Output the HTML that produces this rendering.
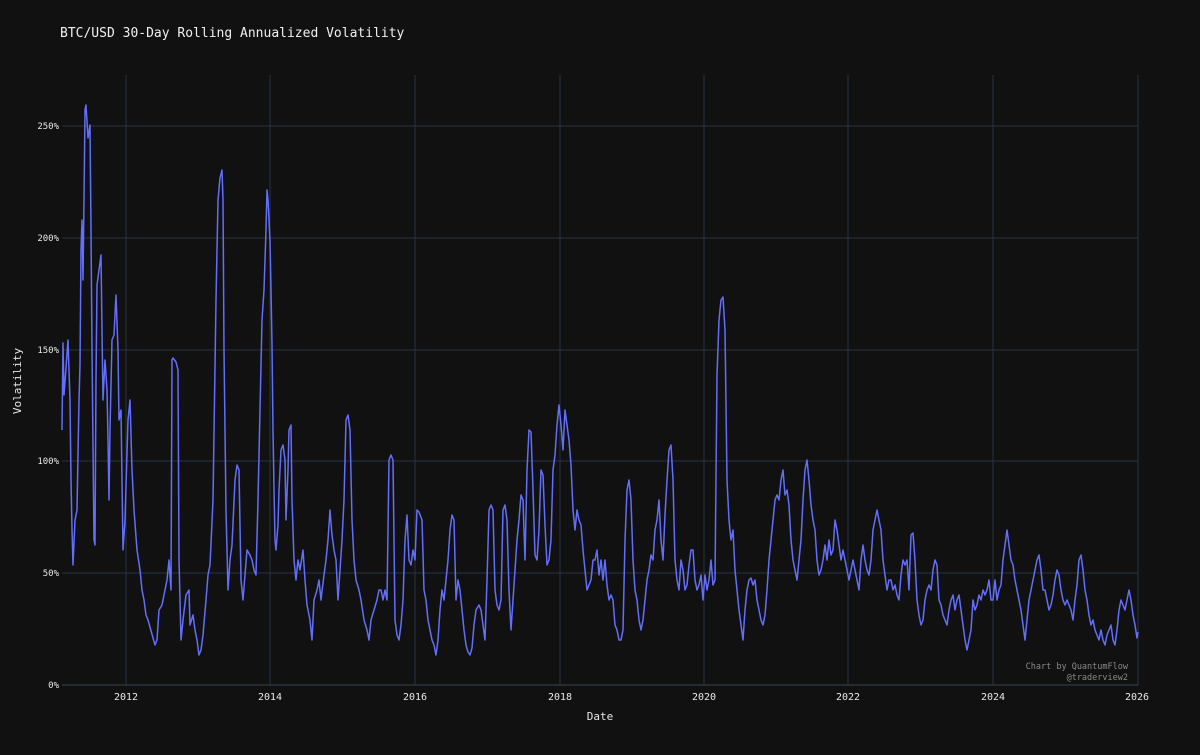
<!DOCTYPE html>
<html><head><meta charset="utf-8"><style>
html,body{margin:0;padding:0;background:#111112;}
svg text{font-family:"DejaVu Sans Mono","Liberation Mono",monospace;}
</style></head><body>
<svg width="1200" height="750" viewBox="0 0 1200 750" xmlns="http://www.w3.org/2000/svg">
<rect width="1200" height="750" fill="#111112"/>
<text x="60" y="37" fill="#f0f0f0" font-size="13">BTC/USD 30-Day Rolling Annualized Volatility</text>
<g stroke="#283442" stroke-width="1">
<line x1="62" y1="126" x2="1138" y2="126"/><line x1="62" y1="238" x2="1138" y2="238"/>
<line x1="62" y1="350" x2="1138" y2="350"/><line x1="62" y1="461" x2="1138" y2="461"/>
<line x1="62" y1="573" x2="1138" y2="573"/>
<line x1="126" y1="75" x2="126" y2="685"/><line x1="270" y1="75" x2="270" y2="685"/>
<line x1="415" y1="75" x2="415" y2="685"/><line x1="560" y1="75" x2="560" y2="685"/>
<line x1="704" y1="75" x2="704" y2="685"/><line x1="848" y1="75" x2="848" y2="685"/>
<line x1="993" y1="75" x2="993" y2="685"/><line x1="1138" y1="75" x2="1138" y2="685"/>
</g>
<line x1="62" y1="685" x2="1138" y2="685" stroke="#3a4450" stroke-width="1"/>
<g fill="#e8e8e8" font-size="9" text-anchor="end">
<text x="59" y="129">250%</text><text x="59" y="241">200%</text><text x="59" y="353">150%</text>
<text x="59" y="464">100%</text><text x="59" y="576">50%</text><text x="59" y="688">0%</text>
</g>
<g fill="#e8e8e8" font-size="10" text-anchor="middle">
<text x="126" y="700">2012</text><text x="270" y="700">2014</text><text x="415" y="700">2016</text>
<text x="560" y="700">2018</text><text x="704" y="700">2020</text><text x="848" y="700">2022</text>
<text x="993" y="700">2024</text><text x="1137" y="700">2026</text>
</g>
<text x="600" y="720" fill="#e8e8e8" font-size="11" text-anchor="middle">Date</text>
<text x="21" y="381" fill="#e8e8e8" font-size="11" text-anchor="middle" transform="rotate(-90 21 381)">Volatility</text>
<g fill="#8a8a8a" font-size="8.5" text-anchor="end">
<text x="1128" y="669">Chart by QuantumFlow</text><text x="1128" y="680">@traderview2</text>
</g>
<polyline fill="none" stroke="#636efa" stroke-width="1.5" stroke-linejoin="round" points="62,430 63,343 64,395 66,368 68,340 70,400 71,480 72,530 73,565 75,520 77,510 79,400 80,365 81,250 82,220 83,280 84,200 85,110 86,105 88,138 90,125 91,230 92,350 94,540 95,545 96,380 97,285 99,270 101,255 102,330 103,400 105,360 107,390 108,440 109,500 110,430 112,340 114,335 116,295 118,350 119,420 121,410 123,550 125,520 128,420 130,400 132,470 134,510 137,550 140,570 142,590 144,600 146,615 148,620 155,645 157,640 159,610 162,605 165,590 167,580 169,560 171,590 172,360 173,358 176,362 178,370 179,560 181,640 183,620 186,595 189,590 190,625 193,615 195,630 197,640 199,655 201,650 203,635 206,600 208,575 210,565 213,500 216,300 218,200 220,178 222,170 223,200 224,350 226,510 228,590 230,560 232,545 235,480 237,465 239,470 241,580 243,600 245,575 247,550 250,555 252,560 254,570 256,575 258,500 260,410 262,320 264,290 266,230 267,190 268,200 270,240 271,290 272,345 273,430 274,490 275,540 276,550 278,525 279,490 281,450 283,445 285,460 286,520 288,470 289,430 291,425 292,500 294,560 296,580 298,560 300,570 303,550 305,580 307,605 310,620 312,640 314,600 317,590 319,580 321,600 324,575 326,560 328,540 330,510 332,535 334,550 336,560 338,600 340,570 342,540 344,500 346,420 348,415 350,430 352,520 354,560 356,580 359,590 361,600 364,620 367,630 369,640 371,620 374,610 377,600 379,590 381,590 383,600 385,590 387,600 389,460 391,455 393,460 395,620 397,635 399,640 401,625 403,600 405,540 407,515 409,560 411,565 413,550 415,560 417,510 419,512 422,520 424,590 426,600 428,620 430,630 432,640 434,645 436,655 438,640 440,610 442,590 444,600 446,580 448,560 450,530 452,515 454,520 456,600 458,580 460,590 462,610 464,630 466,645 468,652 470,655 472,648 474,625 476,610 479,605 481,610 483,625 485,640 487,580 489,510 491,505 493,510 495,590 497,605 499,610 501,600 503,510 505,505 507,520 509,590 511,630 513,600 515,570 517,540 519,520 521,495 523,500 525,560 527,470 529,430 531,432 533,490 535,555 537,560 539,530 541,470 543,475 545,525 547,565 549,560 551,540 553,470 555,455 557,425 559,405 561,425 563,450 565,410 567,425 569,440 571,465 573,510 575,530 577,510 579,520 581,525 583,550 585,570 587,590 589,585 591,580 593,560 595,560 597,550 599,575 601,560 603,580 605,560 607,585 609,600 611,595 613,600 615,625 617,630 619,640 621,640 623,630 625,540 627,490 629,480 631,500 633,560 635,590 637,600 639,620 641,630 643,620 645,600 647,580 649,570 651,555 653,560 655,530 657,520 659,500 661,540 663,560 665,515 667,480 669,450 671,445 673,480 675,560 677,580 679,590 681,560 683,570 685,590 687,585 689,565 691,550 693,550 695,580 697,590 699,585 701,575 703,600 705,575 707,590 709,580 711,560 713,585 715,580 717,375 719,320 721,300 723,297 725,330 727,480 729,520 731,540 733,530 735,570 737,590 739,610 741,625 743,640 745,610 747,590 749,580 751,578 753,585 755,580 757,600 759,610 761,620 763,625 765,615 767,590 769,560 771,540 773,520 775,500 777,495 779,500 781,480 783,470 785,495 787,490 789,505 791,540 793,560 795,570 797,580 799,560 801,540 803,500 805,470 807,460 809,480 811,505 813,520 815,530 817,560 819,575 821,570 823,560 825,545 827,560 829,540 831,555 833,550 835,520 837,530 839,545 841,560 843,550 845,560 847,570 849,580 851,570 853,560 855,570 857,580 859,590 861,560 863,545 865,560 867,570 869,575 871,560 873,530 875,520 877,510 879,520 881,530 883,560 885,575 887,590 889,580 891,580 893,590 895,585 897,595 899,600 901,575 903,560 905,565 907,560 909,590 911,535 913,533 915,560 917,600 919,615 921,625 923,620 925,600 927,590 929,585 931,590 933,570 935,560 937,565 939,600 941,605 943,615 945,620 947,625 949,610 951,600 953,595 955,610 957,600 959,595 961,610 963,625 965,640 967,650 969,640 971,630 973,600 975,610 977,605 979,595 981,600 983,590 985,595 987,590 989,580 991,600 993,600 995,580 997,600 999,590 1001,585 1003,560 1005,545 1007,530 1009,545 1011,560 1013,565 1015,580 1017,590 1019,600 1021,610 1023,625 1025,640 1027,620 1029,600 1031,590 1033,580 1035,570 1037,560 1039,555 1041,570 1043,590 1045,590 1047,600 1049,610 1051,605 1053,595 1055,580 1057,570 1059,575 1061,590 1063,600 1065,605 1067,600 1069,605 1071,610 1073,620 1075,600 1077,585 1079,560 1081,555 1083,570 1085,590 1087,600 1089,615 1091,625 1093,620 1095,630 1097,635 1099,640 1101,630 1103,640 1105,645 1107,635 1109,630 1111,625 1113,640 1115,645 1117,630 1119,610 1121,600 1123,605 1125,610 1127,600 1129,590 1131,600 1133,615 1135,625 1137,638 1138,632"/>
</svg>
</body></html>
